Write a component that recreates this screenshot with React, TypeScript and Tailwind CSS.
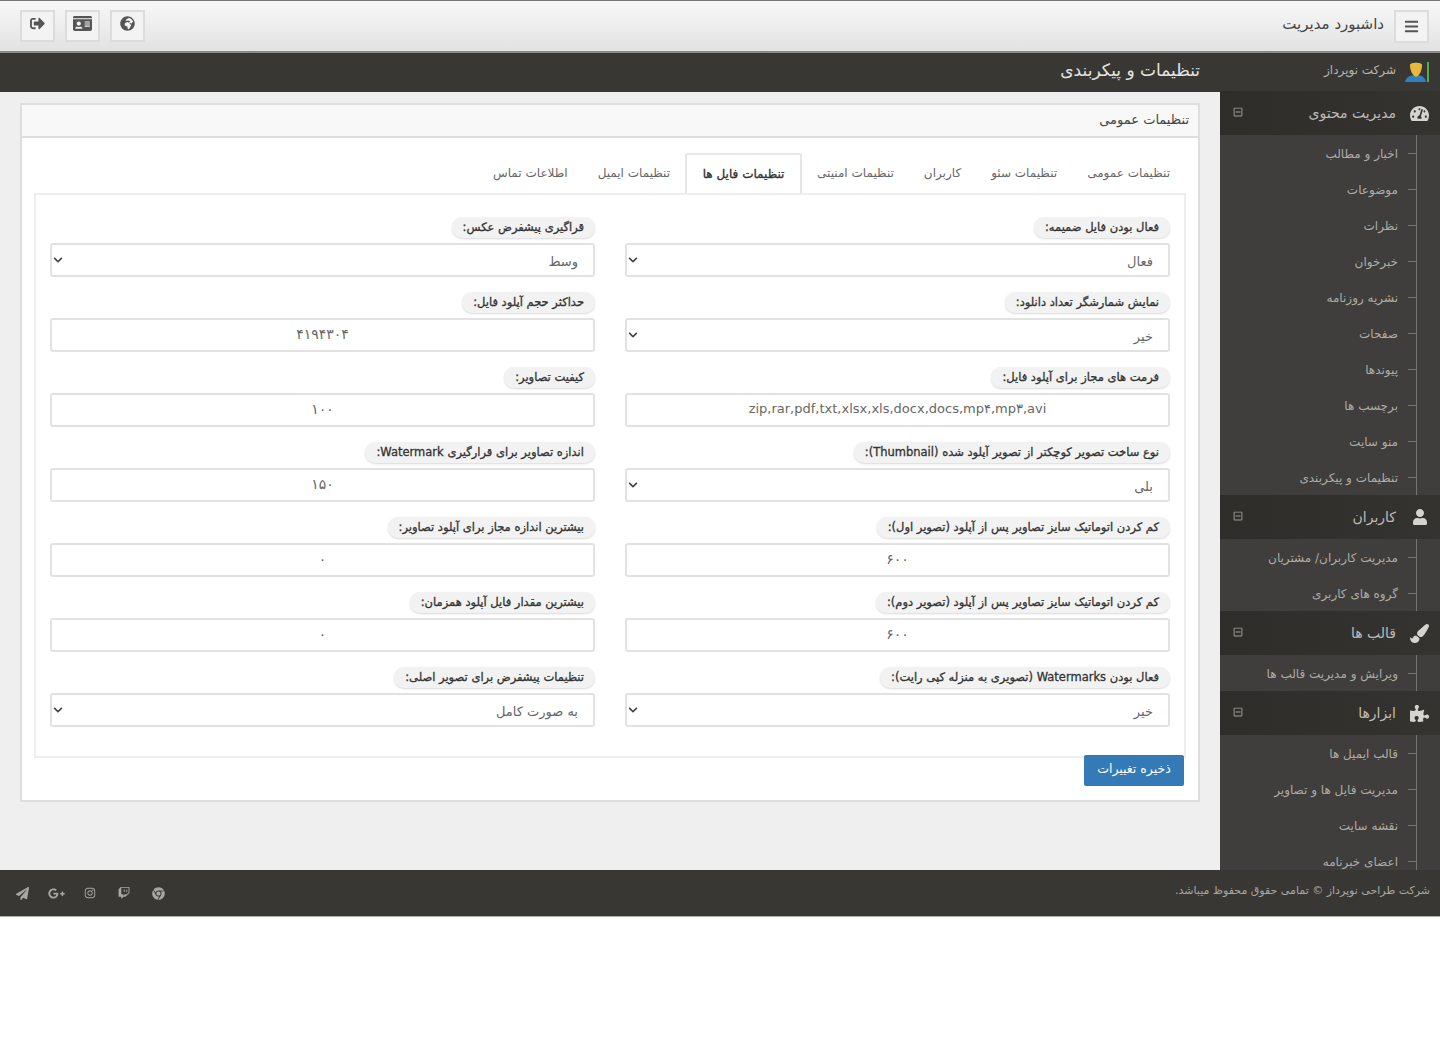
import {
  FaBars, FaChrome, FaGlobeAfrica, FaGooglePlusG, FaInstagram, FaPaintBrush, FaPaperPlane, FaPuzzlePiece,
  FaIdCard, FaRegMinusSquare, FaSignOutAlt, FaTachometerAlt, FaTwitch, FaUser, FaChevronDown,
} from 'react-icons/fa'
import type { IconType } from 'react-icons'

interface Field {
  label: string
  value: string
  select?: boolean
  num?: boolean
}

const rightFields: Field[] = [
  { label: 'فعال بودن فایل ضمیمه:', value: 'فعال', select: true },
  { label: 'نمایش شمارشگر تعداد دانلود:', value: 'خیر', select: true },
  { label: 'فرمت های مجاز برای آپلود فایل:', value: 'zip,rar,pdf,txt,xlsx,xls,docx,docs,mp۴,mp۳,avi' },
  { label: 'نوع ساخت تصویر کوچکتر از تصویر آپلود شده (Thumbnail):', value: 'بلی', select: true },
  { label: 'کم کردن اتوماتیک سایز تصاویر پس از آپلود (تصویر اول):', value: '۶۰۰', num: true },
  { label: 'کم کردن اتوماتیک سایز تصاویر پس از آپلود (تصویر دوم):', value: '۶۰۰', num: true },
  { label: 'فعال بودن Watermarks (تصویری به منزله کپی رایت):', value: 'خیر', select: true },
]

const leftFields: Field[] = [
  { label: 'قراگیری پیشفرض عکس:', value: 'وسط', select: true },
  { label: 'حداکثر حجم آپلود فایل:', value: '۴۱۹۴۳۰۴', num: true },
  { label: 'کیفیت تصاویر:', value: '۱۰۰', num: true },
  { label: 'اندازه تصاویر برای قرارگیری Watermark:', value: '۱۵۰', num: true },
  { label: 'بیشترین اندازه مجاز برای آپلود تصاویر:', value: '۰', num: true },
  { label: 'بیشترین مقدار فایل آپلود همزمان:', value: '۰', num: true },
  { label: 'تنظیمات پیشفرض برای تصویر اصلی:', value: 'به صورت کامل', select: true },
]

const tabs = ['تنظیمات عمومی', 'تنظیمات سئو', 'کاربران', 'تنظیمات امنیتی', 'تنظیمات فایل ها', 'تنظیمات ایمیل', 'اطلاعات تماس']

const menu: { title: string; icon: IconType; size: number; items: string[] }[] = [
  {
    title: 'مدیریت محتوی',
    icon: FaTachometerAlt,
    size: 19,
    items: ['اخبار و مطالب', 'موضوعات', 'نظرات', 'خبرخوان', 'نشریه روزنامه', 'صفحات', 'پیوندها', 'برچسب ها', 'منو سایت', 'تنظیمات و پیکربندی'],
  },
  { title: 'کاربران', icon: FaUser, size: 16, items: ['مدیریت کاربران/ مشتریان', 'گروه های کاربری'] },
  { title: 'قالب ها', icon: FaPaintBrush, size: 19, items: ['ویرایش و مدیریت قالب ها'] },
  { title: 'ابزارها', icon: FaPuzzlePiece, size: 19, items: ['قالب ایمیل ها', 'مدیریت فایل ها و تصاویر', 'نقشه سایت', 'اعضای خبرنامه'] },
]

const socials: { icon: IconType; size: number }[] = [
  { icon: FaPaperPlane, size: 13 },
  { icon: FaGooglePlusG, size: 17 },
  { icon: FaInstagram, size: 12 },
  { icon: FaTwitch, size: 12 },
  { icon: FaChrome, size: 13 },
]

function TopButton({ icon: Icon, size }: { icon: IconType; size: number }) {
  return (
    <div className="flex h-[32px] w-[35px] items-center justify-center border-2 border-[#dcdcdc] bg-[#f3f3f3] pb-[4px] text-[#555]">
      <Icon size={size} />
    </div>
  )
}

function FormField({ field }: { field: Field }) {
  return (
    <div className="h-[75px]">
      <div className="flex h-[27px] items-start">
        <label className="mt-[1px] flex h-[21px] items-center rounded-[10px] bg-[#f2f2f2] px-[11px] text-[11.5px] text-[#333] shadow-[0_1px_2px_rgba(0,0,0,0.15)] [-webkit-text-stroke:0.3px_#333]">
          {field.label}
        </label>
      </div>
      <div className="relative">
        <div
          className={`flex h-[34px] items-center rounded-[3px] border-2 border-[#e2e2e2] bg-white text-[#666] ${field.num ? 'text-[14px]' : 'text-[13px]'} ${field.select ? 'pr-[15px] pt-[4px]' : 'justify-center pb-[2px]'}`}
        >
          {field.value}
        </div>
        {field.select && <FaChevronDown size={10} className="absolute left-[3px] top-[12px] text-[#444]" />}
      </div>
    </div>
  )
}

export default function App() {
  return (
    <div dir="rtl" className="min-h-[1049px] bg-white font-['DejaVu_Sans',sans-serif]">
      {/* نوار بالا */}
      <header className="flex h-[53px] items-center justify-between border-b-2 border-t border-b-[#8a8a86] border-t-[#777] bg-gradient-to-b from-[#f8f8f8] to-[#e2e2e2] pl-5 pr-[11px]">
        <div className="flex items-center gap-[10px]">
          <div className="flex h-[33px] w-[35px] items-center justify-center border-2 border-[#dcdcdc] bg-[#f3f3f3] text-[#555]">
            <FaBars size={15} />
          </div>
          <span className="pb-[4px] text-[15px] text-[#444]">داشبورد مدیریت</span>
        </div>
        <div className="flex flex-row-reverse gap-[10px] pb-[1px]">
          <TopButton icon={FaSignOutAlt} size={15} />
          <TopButton icon={FaIdCard} size={19} />
          <TopButton icon={FaGlobeAfrica} size={15} />
        </div>
      </header>

      <div className="flex h-[817px]">
        {/* منوی کناری */}
        <aside className="w-[220px] shrink-0 overflow-hidden bg-[#3f3e3c]">
          <div className="flex h-[38px] items-center gap-[8px] bg-[#393733] pr-[10px] text-[12px] text-[#b5b3ae]">
            <svg width="26" height="22" viewBox="0 0 26 22">
              <rect x="23" y="1" width="2" height="20" fill="#4caf50" />
              <path d="M1 21c1-5 5-6 8-7l3 2 3-2c3 1 6 2 7 7z" fill="#2f7fc1" />
              <path d="M6 4c0-3 12-3 12 0 0 6-3 11-6 12-3-1-6-6-6-12z" fill="#e8b93c" />
            </svg>
            <span className="pb-[5px]">شرکت نوپرداز</span>
          </div>
          {menu.map((group) => (
            <div key={group.title}>
              <div className="flex h-[44px] items-center bg-gradient-to-l from-[#35332f] to-[#2f2d2a] pl-[13px] pr-[11px] text-[14px] text-[#bdbbb6]">
                <span className="flex w-[19px] shrink-0 justify-center text-[#d6d4cf]">
                  <group.icon size={group.size} />
                </span>
                <span className="mr-[14px]">{group.title}</span>
                <FaRegMinusSquare size={10} className="mr-auto -mt-[3px] text-[#a09e99]" />
              </div>
              <ul className="mr-[23px] border-r border-[#77756f]">
                {group.items.map((item) => (
                  <li key={item} className="flex h-[36px] items-center text-[12px] text-[#aeaca7]">
                    <span className="h-px w-[8px] bg-[#77756f]" />
                    <span className="mr-[10px] pt-[1px]">{item}</span>
                  </li>
                ))}
              </ul>
            </div>
          ))}
        </aside>

        {/* محتوا */}
        <main className="min-w-0 flex-1 bg-[#efefef]">
          <div className="flex h-[39px] items-center bg-[#393733] pb-[4px] pr-5 text-[17px] text-[#e6e5e2]">تنظیمات و پیکربندی</div>
          <section className="mx-5 mt-[11px] h-[699px] border-2 border-[#dedede] bg-white">
            <div className="flex h-[33px] items-center border-b-2 border-[#dedede] bg-[#f8f8f8] pb-[2px] pr-[9px] text-[13px] text-[#444]">
              تنظیمات عمومی
            </div>
            <div className="px-[12px] pt-[15px]">
              <div className="flex h-[40px] pr-[1px]">
                {tabs.map((tab, i) => (
                  <div
                    key={tab}
                    className={`flex items-center text-[12px] ${i === 4 ? 'h-[40px] w-[117px] justify-center rounded-t-[3px] border-2 border-b-0 border-[#e6e6e6] bg-white text-[#333] [-webkit-text-stroke:0.35px_#333]' : 'px-[15px] text-[#666]'}`}
                  >
                    {tab}
                  </div>
                ))}
              </div>
              <div className="h-[565px] border-2 border-[#eeeeee] px-[14px] pt-[21px]">
                <div className="grid grid-cols-2 gap-x-[30px]">
                  <div>{rightFields.map((f) => <FormField key={f.label} field={f} />)}</div>
                  <div>{leftFields.map((f) => <FormField key={f.label} field={f} />)}</div>
                </div>
              </div>
              <div className="-mt-[3px] flex justify-start pr-[2px]">
                <button className="h-[31px] w-[100px] rounded-[2px] bg-[#337ab7] pb-[2px] text-[12.5px] text-white">ذخیره تغییرات</button>
              </div>
            </div>
          </section>
        </main>
      </div>

      {/* پاورقی */}
      <footer className="flex h-[47px] items-center justify-between border-b border-[#aaa] bg-[#393733] pl-[5px] pr-[10px]">
        <span className="pb-[3px] text-[11px] text-[#a9a7a2]">شرکت طراحی نوپرداز © تمامی حقوق محفوظ میباشد.</span>
        <div className="flex flex-row-reverse items-center text-[#a9a7a2]">
          {socials.map((s, i) => (
            <span key={i} className="flex w-[34px] justify-center">
              <s.icon size={s.size} />
            </span>
          ))}
        </div>
      </footer>
    </div>
  )
}
